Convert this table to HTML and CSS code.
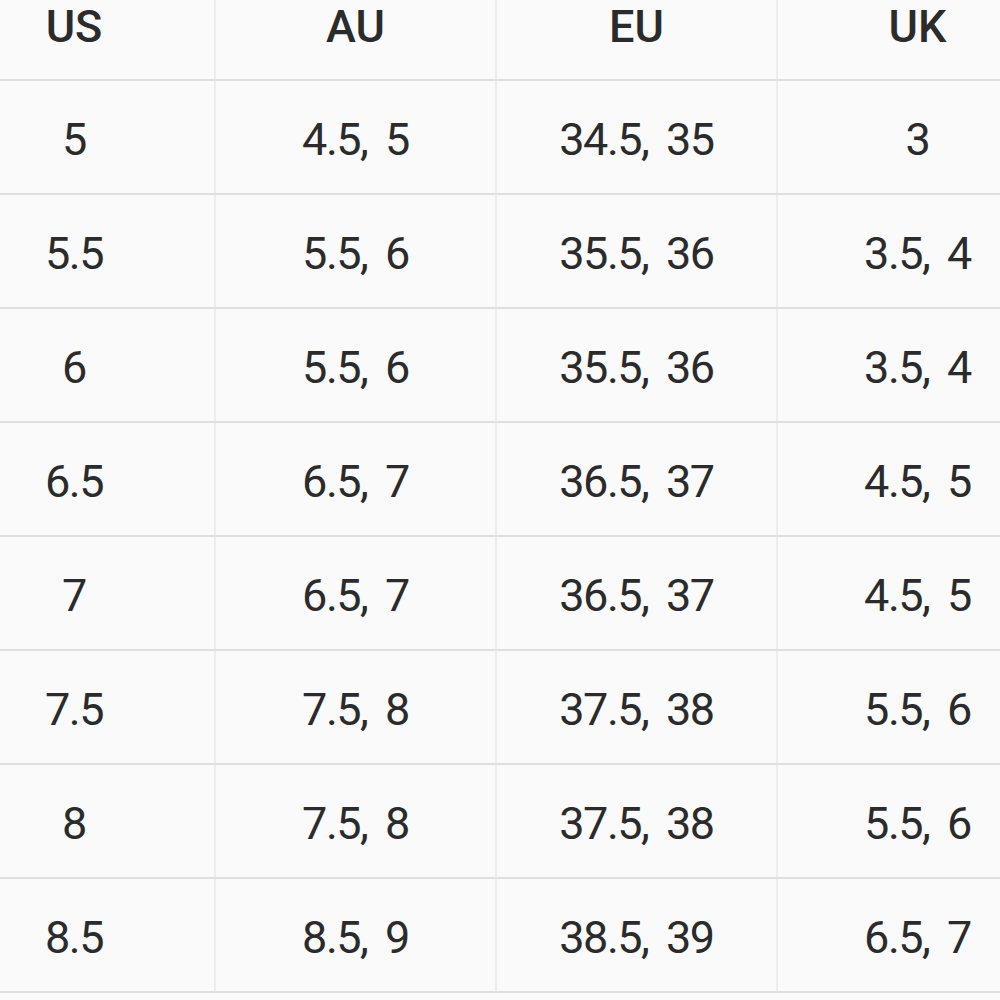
FILE: index.html
```html
<!DOCTYPE html>
<html lang="en">
<head>
<meta charset="utf-8">
<title>Size chart</title>
<link rel="stylesheet" href="styles.css">
</head>
<body>
<table class="sizes">
  <thead>
    <tr><th>US</th><th>AU</th><th>EU</th><th>UK</th></tr>
  </thead>
  <tbody>
    <tr><td>5</td><td>4.5, 5</td><td>34.5, 35</td><td>3</td></tr>
    <tr><td>5.5</td><td>5.5, 6</td><td>35.5, 36</td><td>3.5, 4</td></tr>
    <tr><td>6</td><td>5.5, 6</td><td>35.5, 36</td><td>3.5, 4</td></tr>
    <tr><td>6.5</td><td>6.5, 7</td><td>36.5, 37</td><td>4.5, 5</td></tr>
    <tr><td>7</td><td>6.5, 7</td><td>36.5, 37</td><td>4.5, 5</td></tr>
    <tr><td>7.5</td><td>7.5, 8</td><td>37.5, 38</td><td>5.5, 6</td></tr>
    <tr><td>8</td><td>7.5, 8</td><td>37.5, 38</td><td>5.5, 6</td></tr>
    <tr><td>8.5</td><td>8.5, 9</td><td>38.5, 39</td><td>6.5, 7</td></tr>
  </tbody>
</table>
</body>
</html>
```
FILE: styles.css
```css
html, body {
  margin: 0;
  padding: 0;
  background: #fafafa;
  overflow: hidden;
}
body {
  font-family: Roboto, "Liberation Sans", sans-serif;
  color: #2b2b2b;
}
.sizes {
  border-collapse: collapse;
  table-layout: fixed;
  width: 1124px;
  margin-left: -66px;
}
.sizes th,
.sizes td {
  width: 281px;
  text-align: center;
  padding: 0;
  border-right: 2px solid #efede9;
  border-bottom: 2px solid #dfdfdf;
  line-height: 1;
}
.sizes th {
  height: 80px;
  font-size: 45px;
  font-weight: 500;
  vertical-align: top;
  padding-top: 4px;
  box-sizing: border-box;
}
.sizes td {
  height: 108px;
  font-size: 45px;
  font-weight: 400;
  letter-spacing: -1.5px;
  word-spacing: 8px;
  vertical-align: middle;
  padding-top: 4px;
}
```
